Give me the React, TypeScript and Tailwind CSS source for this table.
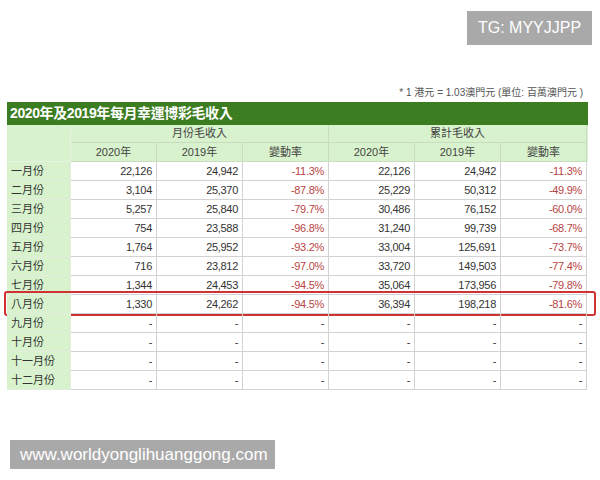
const FONT = "font-['Liberation_Sans','Noto_Sans_CJK_TC',sans-serif]";

type Row = [string, string, string, string, string, string, string];

const rows: Row[] = [
  ["一月份", "22,126", "24,942", "-11.3%", "22,126", "24,942", "-11.3%"],
  ["二月份", "3,104", "25,370", "-87.8%", "25,229", "50,312", "-49.9%"],
  ["三月份", "5,257", "25,840", "-79.7%", "30,486", "76,152", "-60.0%"],
  ["四月份", "754", "23,588", "-96.8%", "31,240", "99,739", "-68.7%"],
  ["五月份", "1,764", "25,952", "-93.2%", "33,004", "125,691", "-73.7%"],
  ["六月份", "716", "23,812", "-97.0%", "33,720", "149,503", "-77.4%"],
  ["七月份", "1,344", "24,453", "-94.5%", "35,064", "173,956", "-79.8%"],
  ["八月份", "1,330", "24,262", "-94.5%", "36,394", "198,218", "-81.6%"],
  ["九月份", "-", "-", "-", "-", "-", "-"],
  ["十月份", "-", "-", "-", "-", "-", "-"],
  ["十一月份", "-", "-", "-", "-", "-", "-"],
  ["十二月份", "-", "-", "-", "-", "-", "-"],
];

const cols = "grid grid-cols-[64px_86px_86px_86px_86px_86px_86px]";

const App = () => {
  return (
    <div className={`relative w-[600px] h-[480px] bg-white overflow-hidden ${FONT}`}>
      {/* watermark top right */}
      <div className="absolute left-[467px] top-[11px] w-[125px] h-[34px] bg-[#a9a9a9] flex items-center justify-center text-white text-[16px]">
        TG: MYYJJPP
      </div>

      <div className="ml-[7px] w-[581px] pt-[86px]">
        <p className="h-[14px] mb-[2px] pr-[5px] text-right text-[10px] leading-[14px] text-[#555]">
          * 1 港元 = 1.03澳門元 (單位: 百萬澳門元 )
        </p>

        <div className="h-[23px] bg-[#3d7d22] px-[3px] flex items-center text-white text-[14px] font-bold tracking-[-0.4px]">
          2020年及2019年每月幸運博彩毛收入
        </div>

        {/* header */}
        <div className={`${cols} grid-rows-[18px_19px] text-[11px] text-[#444] bg-[#d8f2cd]`}>
          <div className="row-span-2 border-r border-b border-[#e6f3df]" />
          <div className="col-span-3 border-r border-b border-[#c9dcc0] flex items-center justify-center">月份毛收入</div>
          <div className="col-span-3 border-r border-b border-[#c9dcc0] flex items-center justify-center">累計毛收入</div>
          {["2020年", "2019年", "變動率", "2020年", "2019年", "變動率"].map((h, i) => (
            <div key={i} className="border-r border-b border-[#c9dcc0] flex items-center justify-center">
              {h}
            </div>
          ))}
        </div>

        {/* body */}
        {rows.map((r) => (
          <div key={r[0]} className={`relative ${cols} text-[11px] text-[#333]`}>
            <div className="h-[19px] px-[4px] flex items-center bg-[#d8f2cd] border-r border-b border-[#e2eedb]">{r[0]}</div>
            {r.slice(1).map((v, i) => (
              <div
                key={i}
                className={`h-[19px] px-[4px] flex items-center justify-end tracking-[-0.3px] border-r border-b border-[#d2d2d2] ${
                  (i === 2 || i === 5) && v !== "-" ? "text-[#b84444]" : ""
                }`}
              >
                {v}
              </div>
            ))}
            {r[0] === "八月份" && (
              <span className="absolute -left-[3px] -right-[8px] -top-[4px] -bottom-[2px] border-[2.5px] border-[#cf3232] rounded-[3px] pointer-events-none" />
            )}
          </div>
        ))}
      </div>

      {/* watermark bottom left */}
      <div className="absolute left-[10px] top-[440px] w-[265px] h-[29px] bg-[#a9a9a9] flex items-center px-[10px] text-white text-[17px]">
        www.worldyonglihuanggong.com
      </div>
    </div>
  );
};

export default App;
